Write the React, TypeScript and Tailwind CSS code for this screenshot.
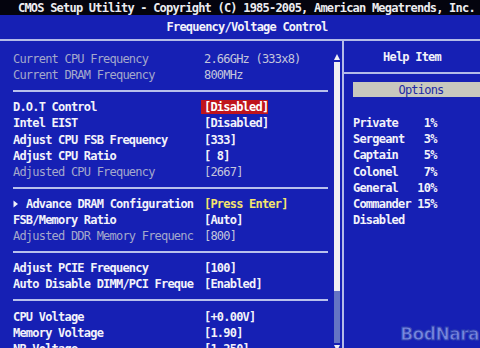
import React from "react";

type Row =
  | { sep: true }
  | {
      sep?: false;
      label: string;
      value: string;
      dim?: boolean;
      tone?: "red" | "yellow";
      arrow?: boolean;
    };

const ROWS: Row[] = [
  { label: "Current CPU Frequency", value: "2.66GHz (333x8)", dim: true },
  { label: "Current DRAM Frequency", value: "800MHz", dim: true },
  { sep: true },
  { label: "D.O.T Control", value: "[Disabled]", tone: "red" },
  { label: "Intel EIST", value: "[Disabled]" },
  { label: "Adjust CPU FSB Frequency", value: "[333]" },
  { label: "Adjust CPU Ratio", value: "[ 8]" },
  { label: "Adjusted CPU Frequency", value: "[2667]", dim: true },
  { sep: true },
  { label: "Advance DRAM Configuration", value: "[Press Enter]", tone: "yellow", arrow: true },
  { label: "FSB/Memory Ratio", value: "[Auto]" },
  { label: "Adjusted DDR Memory Frequenc", value: "[800]", dim: true },
  { sep: true },
  { label: "Adjust PCIE Frequency", value: "[100]" },
  { label: "Auto Disable DIMM/PCI Freque", value: "[Enabled]" },
  { sep: true },
  { label: "CPU Voltage", value: "[+0.00V]" },
  { label: "Memory Voltage", value: "[1.90]" },
  { label: "NB Voltage", value: "[1.250]" },
];

const OPTIONS = [
  "Private    1%",
  "Sergeant   3%",
  "Captain    5%",
  "Colonel    7%",
  "General   10%",
  "Commander 15%",
  "Disabled",
];

const mono = "font-['DejaVu_Sans_Mono',monospace] text-[12px] leading-[14px] tracking-[-0.79px] whitespace-pre";

function SettingRow({ row }: { row: Row }) {
  if (row.sep) {
    return (
      <div className="flex h-[16.1px] shrink-0 items-center">
        <div className="h-[2px] w-full bg-[#b8c0ec]" />
      </div>
    );
  }

  const labelColor = row.dim ? "text-[#a4a8cc] font-normal" : "text-[#f2f2fa] font-bold";
  let valueClass = row.dim ? "text-[#c4c6dc] font-normal" : "text-[#f2f2fa] font-bold";
  if (row.tone === "red") valueClass = "text-white font-bold bg-[#c0141c] pl-[3px] -ml-[3px]";
  if (row.tone === "yellow") valueClass = "text-[#f4e46c] font-bold";

  return (
    <div className={`flex h-[16.1px] shrink-0 items-center ${mono}`}>
      <div className={`flex w-[191px] items-center ${labelColor}`}>
        {row.arrow && (
          <svg width="13" height="8" viewBox="0 0 13 8" className="shrink-0">
            <path d="M0.5 0.5 L5 4 L0.5 7.5 Z" fill="#f2f2fa" />
          </svg>
        )}
        <span>{row.label}</span>
      </div>
      <span className={valueClass}>{row.value}</span>
    </div>
  );
}

function ScrollBar() {
  return (
    <div className="flex w-[6px] shrink-0 flex-col items-center pt-[13px]">
      <svg width="6" height="6" viewBox="0 0 6 6" className="shrink-0">
        <path d="M3 0 L6 6 L0 6 Z" fill="#f0f0f4" />
      </svg>
      <div className="mt-[2px] flex h-[281px] w-[6px] shrink-0 flex-col bg-[#6474c4]">
        <div className="h-[229px] w-full bg-[#f0f0f2]" />
      </div>
      <svg width="6" height="6" viewBox="0 0 6 6" className="mt-[2px] shrink-0">
        <path d="M0 0 L6 0 L3 6 Z" fill="#f0f0f4" />
      </svg>
    </div>
  );
}

export default function App() {
  return (
    <div className="relative flex h-[348px] w-[480px] flex-col overflow-hidden bg-[#1620b4]">
      <div className={`flex h-[15px] shrink-0 items-center bg-[#04040e] pl-[18px] pt-[1px] text-[#ececf0] font-bold ${mono}`}>
        CMOS Setup Utility - Copyright (C) 1985-2005, American Megatrends, Inc.
      </div>
      <div className={`flex h-[24px] shrink-0 items-center justify-center pl-[14px] text-[#f2f2fa] font-bold ${mono}`}>
        Frequency/Voltage Control
      </div>
      <div className="h-[2px] w-full shrink-0 bg-[#b4bce8]" />

      <div className="flex min-h-0 flex-1">
        <div className="flex w-[342px] shrink-0 gap-[6px] overflow-hidden pl-[13px]">
          <div className="flex w-[315px] shrink-0 flex-col pt-[10px]">
            {ROWS.map((row, i) => (
              <SettingRow key={i} row={row} />
            ))}
          </div>
          <ScrollBar />
        </div>

        <div className="w-[2px] shrink-0 bg-[#b4bce8]" />

        <div className="flex flex-1 flex-col overflow-hidden">
          <div className={`flex h-[31px] shrink-0 items-center justify-center text-[#f2f2fa] font-bold ${mono}`}>
            Help Item
          </div>
          <div className="h-[2px] w-full shrink-0 bg-[#b4bce8]" />
          <div className="mt-[8px] pl-[9px]">
            <div className={`flex h-[15px] w-[136px] items-center justify-center bg-[#c8c8be] text-[#2028a4] ${mono}`}>
              Options
            </div>
          </div>
          <div className="mt-[18px] flex flex-col pl-[9px]">
            {OPTIONS.map((o) => (
              <div key={o} className={`flex h-[16.2px] shrink-0 items-center text-[#f2f2fa] font-bold ${mono}`}>
                {o}
              </div>
            ))}
          </div>
        </div>
      </div>

      <div className="absolute bottom-[5px] right-[1px] font-['DejaVu_Sans',sans-serif] text-[17px] font-bold leading-none tracking-[-0.5px] text-[#7888e0] [-webkit-text-stroke:1px_#3040b0]">
        BodNara
      </div>
    </div>
  );
}
